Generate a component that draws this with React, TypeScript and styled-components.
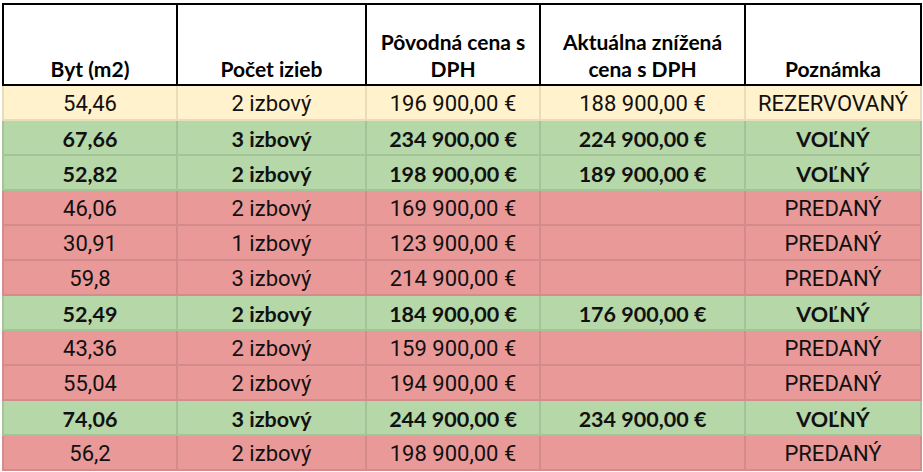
import React from "react";
import styled, { createGlobalStyle } from "styled-components";

const Global = createGlobalStyle`
  html, body { margin: 0; padding: 0; background: #ffffff; }
  body { width: 923px; height: 472px; overflow: hidden; }
`;

type Status = "rez" | "free" | "sold";

const rows: { area: string; rooms: string; price: string; reduced: string; note: string; status: Status }[] = [
  { area: "54,46", rooms: "2 izbový", price: "196 900,00 €", reduced: "188 900,00 €", note: "REZERVOVANÝ", status: "rez" },
  { area: "67,66", rooms: "3 izbový", price: "234 900,00 €", reduced: "224 900,00 €", note: "VOĽNÝ", status: "free" },
  { area: "52,82", rooms: "2 izbový", price: "198 900,00 €", reduced: "189 900,00 €", note: "VOĽNÝ", status: "free" },
  { area: "46,06", rooms: "2 izbový", price: "169 900,00 €", reduced: "", note: "PREDANÝ", status: "sold" },
  { area: "30,91", rooms: "1 izbový", price: "123 900,00 €", reduced: "", note: "PREDANÝ", status: "sold" },
  { area: "59,8", rooms: "3 izbový", price: "214 900,00 €", reduced: "", note: "PREDANÝ", status: "sold" },
  { area: "52,49", rooms: "2 izbový", price: "184 900,00 €", reduced: "176 900,00 €", note: "VOĽNÝ", status: "free" },
  { area: "43,36", rooms: "2 izbový", price: "159 900,00 €", reduced: "", note: "PREDANÝ", status: "sold" },
  { area: "55,04", rooms: "2 izbový", price: "194 900,00 €", reduced: "", note: "PREDANÝ", status: "sold" },
  { area: "74,06", rooms: "3 izbový", price: "244 900,00 €", reduced: "234 900,00 €", note: "VOĽNÝ", status: "free" },
  { area: "56,2", rooms: "2 izbový", price: "198 900,00 €", reduced: "", note: "PREDANÝ", status: "sold" },
];

const bg: Record<Status, string> = {
  rez: "#fff2cc",
  free: "#b6d7a8",
  sold: "#ea9999",
};

const Sheet = styled.div`
  margin: 3px 0 0 2px;
  width: 920px;
  display: grid;
  grid-template-columns: 176px 189px 174px 205px 176px;
  border-top: 2px solid #000;
`;

const HeadCell = styled.div<{ $first?: boolean }>`
  box-sizing: border-box;
  height: 81px;
  background: #fff;
  border-right: 2px solid #000;
  border-bottom: 2px solid #000;
  border-left: ${(p) => (p.$first ? "2px solid #000" : "none")};
  display: flex;
  align-items: flex-end;
  justify-content: center;
  text-align: center;
  padding: 0 2px 2px;
  font-family: Lato, "Open Sans", sans-serif;
  font-weight: 700;
  font-size: 21px;
  line-height: 27px;
  color: #000;
`;

const Cell = styled.div<{ $status: Status; $first?: boolean }>`
  box-sizing: border-box;
  height: 35px;
  background: ${(p) => bg[p.$status]};
  border-right: 2px solid rgba(0, 0, 0, 0.09);
  border-bottom: 2px solid rgba(0, 0, 0, 0.09);
  border-left: ${(p) => (p.$first ? "2px solid rgba(0,0,0,0.09)" : "none")};
  display: flex;
  align-items: center;
  justify-content: center;
  white-space: nowrap;
  color: #111;
  font-family: ${(p) => (p.$status === "free" ? 'Lato, "Open Sans", sans-serif' : 'Roboto, "Noto Sans", sans-serif')};
  font-weight: ${(p) => (p.$status === "free" ? 700 : 400)};
  font-size: ${(p) => (p.$status === "free" ? "21.5px" : "22px")};
  padding-top: 2px;
`;

export default function App() {
  return (
    <>
      <Global />
      <Sheet>
        <HeadCell $first>Byt (m2)</HeadCell>
        <HeadCell>Počet izieb</HeadCell>
        <HeadCell>Pôvodná cena s DPH</HeadCell>
        <HeadCell>Aktuálna znížená cena s DPH</HeadCell>
        <HeadCell>Poznámka</HeadCell>
        {rows.map((r, i) => (
          <React.Fragment key={i}>
            <Cell $status={r.status} $first>{r.area}</Cell>
            <Cell $status={r.status}>{r.rooms}</Cell>
            <Cell $status={r.status}>{r.price}</Cell>
            <Cell $status={r.status}>{r.reduced}</Cell>
            <Cell $status={r.status}>{r.note}</Cell>
          </React.Fragment>
        ))}
      </Sheet>
    </>
  );
}
